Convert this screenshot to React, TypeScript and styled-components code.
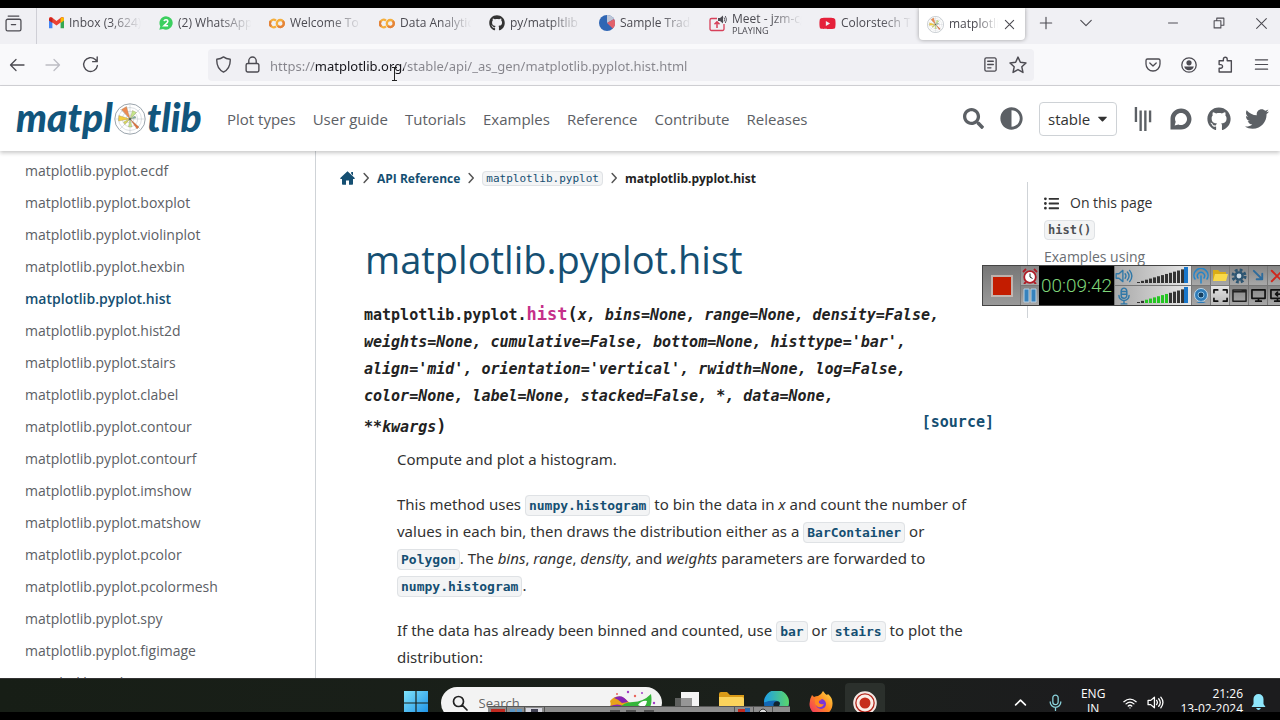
import React from "react";
import styled, { createGlobalStyle } from "styled-components";
import {
  FaSearch,
  FaAdjust,
  FaGitter,
  FaDiscourse,
  FaGithub,
  FaTwitter,
  FaListUl,
  FaCaretDown,
  FaYoutube,
} from "react-icons/fa";

const sans = '"Open Sans", "Noto Sans", sans-serif';
const wide = '"Noto Sans", "Open Sans", sans-serif';
const mono = '"DejaVu Sans Mono", "Liberation Mono", monospace';
const blue = "#154f72";

const GlobalStyle = createGlobalStyle`
  * { box-sizing: border-box; }
  body { margin: 0; background: #000; font-family: ${sans}; color: #323232; overflow: hidden; }
  button { border: 0; background: none; padding: 0; font: inherit; color: inherit; }
  a { color: inherit; text-decoration: none; }
  svg { display: block; flex: none; }
`;

const Screen = styled.div`
  position: relative;
  display: flex;
  flex-direction: column;
  height: 100vh;
  padding: 8px 0;
  overflow: hidden;
  background: #000;
`;

/* Browser chrome */

const TabStrip = styled.div`
  display: flex;
  flex: none;
  height: 36px;
  background: #f0f0f4;
  color: #4c4b52;
`;
const TabsOverview = styled.button`
  display: flex;
  align-items: center;
  width: 37px;
  padding: 0 0 6px 5px;
  border-right: 1px solid #cfcfd6;
`;
const Tab = styled.div<{ $active?: boolean }>`
  display: flex;
  align-items: center;
  gap: 5px;
  flex: 0 1 ${(p) => (p.$active ? 106 : 110)}px;
  min-width: 0;
  margin: ${(p) => (p.$active ? "0 2px 4px" : "0 0 6px")};
  padding: 0 ${(p) => (p.$active ? "10px 0 8px" : "4px 0 12px")};
  border-radius: 0 0 4px 4px;
  background: ${(p) => (p.$active ? "#fff" : "transparent")};
  box-shadow: ${(p) => (p.$active ? "0 0 4px rgba(0,0,0,.35)" : "none")};
  font-size: 12px;
`;
const TabLabel = styled.span`
  flex: 1;
  min-width: 0;
  overflow: hidden;
  white-space: nowrap;
  line-height: 16px;
  mask-image: linear-gradient(to right, #000 55%, transparent 98%);
`;
const Playing = styled.small`
  display: block;
  font-size: 9px;
  line-height: 8px;
`;
const IconButton = styled.button<{ $w: number }>`
  display: flex;
  align-items: center;
  justify-content: center;
  flex: none;
  width: ${(p) => p.$w}px;
`;
const StripActions = styled.div`
  display: flex;
  padding-bottom: 6px;
`;
const WindowButtons = styled(StripActions)`
  margin-left: auto;
`;

const Toolbar = styled.div`
  display: flex;
  align-items: center;
  flex: none;
  height: 42px;
  background: #f9f9fb;
  border-bottom: 1px solid #d3d3d8;
  color: #4c4b52;
`;
const NavButtons = styled.div`
  display: flex;
  width: 208px;
  flex: none;
`;
const AddressBar = styled.div`
  display: flex;
  align-items: center;
  flex: 1;
  height: 32px;
  padding-right: 2px;
  border-radius: 4px;
  background: #f0f0f4;
`;
const Address = styled.input`
  flex: 1;
  min-width: 0;
  height: 32px;
  padding: 2px 0 0;
  margin-left: 4px;
  border: 0;
  outline: 0;
  font: 13px ${wide};
  color: transparent;
  background: linear-gradient(to right, #85848b 45px, #15141a 45px 134px, #85848b 134px);
  background-clip: text;
  -webkit-background-clip: text;
`;
const ToolbarActions = styled.div`
  display: flex;
  width: 246px;
  justify-content: flex-end;
`;

/* Documentation page */

const SiteHeader = styled.header`
  position: relative;
  display: flex;
  align-items: center;
  flex: none;
  height: 65px;
  padding: 0 11px 0 16px;
  background: #fff;
  box-shadow: 0 2px 4px rgba(0, 0, 0, 0.22);
  color: #5c6065;
`;
const Logo = styled.a`
  display: flex;
  align-items: center;
  flex: none;
  width: 186px;
  padding-bottom: 4px;
  color: #11557c;
  font: italic 900 39px/48px Lato, sans-serif;
  svg { margin: 4px 1px 0; }
`;
const SiteNav = styled.nav`
  display: flex;
  gap: 17px;
  margin-left: 25px;
  font-size: 15px;
  line-height: 24px;
  white-space: nowrap;
`;
const HeaderTools = styled.div`
  display: flex;
  align-items: center;
  gap: 16px;
  margin-left: auto;
`;
const VersionBox = styled.div`
  position: relative;
  color: #323232;
  svg { position: absolute; right: 7px; top: 9px; pointer-events: none; }
`;
const VersionSelect = styled.select`
  appearance: none;
  width: 78px;
  height: 34px;
  padding: 0 8px;
  border: 1px solid #ced2d6;
  border-radius: 4px;
  background: #fff;
  color: inherit;
  font: 15px ${sans};
`;
const Brands = styled.div`
  display: flex;
  align-items: center;
  gap: 14px;
  margin-left: -2px;
`;

const Page = styled.div`
  display: flex;
  flex: 1;
  min-height: 0;
  background: #fff;
  overflow: hidden;
`;
const Sidebar = styled.nav`
  flex: none;
  width: 316px;
  padding: 4px 0 0 25px;
  border-right: 1px solid #cfd3d7;
  ul { list-style: none; margin: 0; padding: 0; }
`;
const SideLink = styled.a<{ $current?: boolean }>`
  display: block;
  font-size: 14px;
  line-height: 32px;
  font-weight: ${(p) => (p.$current ? 600 : 400)};
  color: ${(p) => (p.$current ? blue : "#5c6065")};
`;
const Article = styled.main`
  flex: 1;
  min-width: 0;
  padding: 17px 32px 0 24px;
`;
const Crumbs = styled.nav`
  display: flex;
  align-items: center;
  gap: 5px;
  height: 20px;
  font-size: 12px;
  font-weight: 700;
  white-space: nowrap;
  color: ${blue};
`;
const CrumbCode = styled.code`
  padding: 0 3px;
  border: 1px solid #dfe2e5;
  border-radius: 4px;
  background: #f3f4f5;
  font: 11px/17px ${mono};
`;
const Current = styled.span`
  color: #222;
`;
const Title = styled.h1`
  margin: 45px 0 0 25px;
  font-size: 38px;
  line-height: 52px;
  font-weight: 400;
  color: ${blue};
`;
const Signature = styled.div`
  margin: 16px 0 0 24px;
  font: bold 15px/27px ${mono};
  white-space: nowrap;
  color: #222;
`;
const FnName = styled.span`
  font-size: 17px;
  color: #c5308a;
`;
const Paren = styled.span`
  font-size: 17px;
`;
const LastLine = styled.div`
  display: flex;
  line-height: 32px;
`;
const Source = styled.a`
  margin: -4px 1px 0 auto;
  color: ${blue};
`;
const Description = styled.div`
  margin: 3px 0 0 57px;
  font-family: ${wide};
  font-size: 15px;
  line-height: 27px;
  white-space: nowrap;
  p { margin: 0 0 18px; }
`;
const CodeLink = styled.a`
  padding: 2px 3px;
  border: 1px solid #dfe2e5;
  border-radius: 4px;
  background: #f3f4f5;
  font: bold 13px/15px ${mono};
  color: ${blue};
`;
const Toc = styled.aside`
  flex: none;
  align-self: flex-start;
  width: 253px;
  height: 136px;
  margin-top: 31px;
  padding: 8px 0 0 16px;
  border-left: 1px solid #cfd3d7;
  font-size: 14px;
`;
const TocTitle = styled.div`
  display: flex;
  align-items: center;
  gap: 11px;
  line-height: 26px;
`;
const TocCode = styled.a`
  display: table;
  margin: 4px 0 5px;
  padding: 1px 3px;
  border: 1px solid #dfe2e5;
  border-radius: 4px;
  background: #f3f4f5;
  font: bold 12px/16px ${mono};
  color: #4d5054;
`;
const TocLink = styled.a`
  color: #6a6e73;
  line-height: 24px;
`;

/* Screen recorder widget floating over the page */

const Recorder = styled.div`
  position: absolute;
  right: 0;
  top: 265px;
  display: flex;
  width: 298px;
  height: 41px;
  border: 1px solid #444;
  border-right: 0;
  background: #777;
  overflow: hidden;
`;
const StopButton = styled.button`
  display: flex;
  align-items: center;
  justify-content: center;
  flex: none;
  width: 37px;
  background: linear-gradient(#777, #999);
`;
const Stack = styled.div<{ $w: number }>`
  display: grid;
  grid-template-rows: 1fr 1fr;
  gap: 1px;
  width: ${(p) => p.$w}px;
  flex: none;
  margin-left: 1px;
`;
const Cell = styled.button<{ $light?: boolean }>`
  display: flex;
  align-items: center;
  justify-content: center;
  overflow: hidden;
  background: ${(p) => (p.$light ? "linear-gradient(#e4e4e4, #b8b8b8)" : "linear-gradient(#858585, #a8a8a8)")};
`;
const Clock = styled.time`
  width: 75px;
  flex: none;
  background: #000;
  color: #7fd67a;
  font: 300 19px/39px Roboto, sans-serif;
  text-align: center;
`;
const Levels = styled.div`
  display: flex;
  align-items: center;
  gap: 4px;
  background: linear-gradient(90deg, #a9a9a9, #e8e8e8);
`;

/* Taskbar */

const Taskbar = styled.footer`
  flex: none;
  height: 34px;
  overflow: hidden;
  background: linear-gradient(90deg, #171e16, #1b201b 60%, #1c1c1e 85%);
  border-top: 1px solid #333;
  color: #fff;
`;
const TaskbarRow = styled.div`
  display: grid;
  grid-template-columns: 1fr auto 1fr;
  align-items: center;
  height: 48px;
  padding-left: 8px;
`;
const Apps = styled.div`
  grid-column: 2;
  display: flex;
  align-items: center;
  gap: 20px;
`;
const SearchBox = styled.label`
  display: flex;
  align-items: center;
  gap: 11px;
  width: 221px;
  height: 32px;
  margin: 0 -7px 0 -7px;
  padding: 0 4px 0 11px;
  border-radius: 16px;
  background: #f3f3f3;
  color: #222;
  input {
    flex: 1;
    min-width: 0;
    border: 0;
    padding: 0;
    background: none;
    font: 13px ${sans};
    &::placeholder { color: #666; opacity: 1; }
  }
`;
const AppTile = styled.button`
  display: flex;
  align-items: center;
  justify-content: center;
  width: 40px;
  height: 40px;
  margin-left: -8px;
  border-radius: 4px;
  background: #2b302c;
`;
const Tray = styled.div`
  grid-column: 3;
  display: flex;
  align-items: center;
  justify-content: flex-end;
  padding: 0 14px 4px 0;
  font-size: 12px;
  line-height: 15px;
`;
const TrayIcons = styled.div<{ $gap: number }>`
  display: flex;
  align-items: center;
  gap: ${(p) => p.$gap}px;
  padding-top: 3px;
`;
const Language = styled.div`
  margin: 0 18px 0 17px;
  text-align: center;
`;
const DateTime = styled.div`
  margin: 0 8px 0 16px;
  text-align: right;
`;
const MiniRecorder = styled.div`
  position: absolute;
  left: 488px;
  bottom: 8px;
  height: 6px;
`;
const Pointer = styled.div`
  position: absolute;
  left: 391px;
  top: 67px;
`;

const Line = ({ d, s = 16, w = 1.3, c = "currentColor" }: { d: string; s?: number; w?: number; c?: string }) => (
  <svg width={s} height={s} viewBox="0 0 16 16" fill="none" stroke={c} strokeWidth={w} strokeLinecap="round" strokeLinejoin="round">
    <path d={d} />
  </svg>
);

const Gmail = () => (
  <svg width="15" height="12" viewBox="0 0 15 12">
    <path d="M0 2v9.200h3.400V4.500z" fill="#4285f4" />
    <path d="M15 2v9.200h-3.400V4.500z" fill="#34a853" />
    <path d="M0 1.600C0 0 1.800-.4 3 .5l4.500 3.600L12 .5c1.200-.9 3-.5 3 1.100v1.500L7.500 8.500 0 3.100z" fill="#ea4335" />
    <path d="M11.600.8c1.400-1.200 3.400-.6 3.400.9v1.700l-3.400 2.500z" fill="#fbbc04" />
    <path d="M0 1.800 3.400.8v5.100L0 3.400z" fill="#c5221f" />
  </svg>
);
const WhatsApp = () => (
  <svg width="14" height="14" viewBox="0 0 14 14">
    <path d="M7 .2a6.700 6.700 0 1 1-3 12.700L.3 13.800l1-3.500A6.800 6.800 0 0 1 7 .2z" fill="#3ccf5f" />
    <path d="M5 5.200c.3-1.900 3.900-1.900 3.900.1 0 1.300-1.400 2.200-3.900 4.400h4.100" fill="none" stroke="#fff" strokeWidth="1.500" />
  </svg>
);
const Colab = () => (
  <svg width="16" height="11" viewBox="0 0 16 11" fill="none" strokeWidth="2.300">
    <path d="M7 2.600a3.700 3.700 0 1 0 0 5.800" stroke="#f5ae3c" />
    <circle cx="11.300" cy="5.500" r="3.500" stroke="#f5ae3c" />
    <path d="M8.800 8a3.500 3.500 0 0 0 5-5" stroke="#e4823a" />
    <path d="M1.800 3.300a3.700 3.700 0 0 0 .4 5" stroke="#e4823a" />
  </svg>
);
const PieIcon = () => (
  <svg width="16" height="16" viewBox="0 0 16 16">
    <circle cx="8" cy="8" r="8" fill="#2f66b4" />
    <path d="M8 8V0a8 8 0 0 1 7 4z" fill="#bfc6d6" />
    <path d="m8 8 7-4a8 8 0 0 1-1.300 9.600z" fill="#e2616b" />
  </svg>
);
const MeetIcon = () => (
  <svg width="18" height="17" viewBox="0 0 18 17" fill="none">
    <path d="M8 3.500H2.500a1.500 1.500 0 0 0-1.500 1.500v9a1.500 1.500 0 0 0 1.500 1.500h11A1.500 1.500 0 0 0 15 14V9" stroke="#d7405a" strokeWidth="1.300" />
    <path d="M8 13V7M5.500 9.300 8 6.800l2.500 2.500" stroke="#d7405a" strokeWidth="1.500" />
    <path d="M9 3h2l3-2.500v8L11 6H9z" fill="#4c4b52" />
    <path d="M15 2.500q1.500 2 0 4M16.300 1q2.500 3.500 0 7" stroke="#4c4b52" strokeWidth=".9" />
  </svg>
);
const Polar = ({ s }: { s: number }) => (
  <svg width={s} height={s} viewBox="0 0 32 32">
    <circle cx="16" cy="16" r="15.200" fill="#fff" stroke="#8f9aa3" strokeWidth=".9" />
    <g fill="none" stroke="#b9c0c6" strokeWidth=".5">
      <circle cx="16" cy="16" r="11.500" />
      <circle cx="16" cy="16" r="7.700" />
      <circle cx="16" cy="16" r="4" />
      <path d="M16 1v30M1 16h30M5.400 5.400l21.200 21.200M26.600 5.400 5.400 26.600" />
    </g>
    <g stroke="#8a7a55" strokeWidth=".3">
      <path d="m16 16-8.500-9.500 5-3z" fill="#ec8a52" />
      <path d="M16 16 4.500 18l.3-5.500z" fill="#f5cf3d" />
      <path d="m16 16 2.500-8.500 4 2z" fill="#c3e68a" />
      <path d="m16 16-6.500 3 1.500 2.500z" fill="#d8d95a" />
      <path d="m16 16-1.500 8h3.500z" fill="#c3e68a" />
      <path d="m16 16 9 8-2 2z" fill="#e0713e" />
      <path d="m16 16 5-3 1 2z" fill="#78b3a5" />
    </g>
    <circle cx="16" cy="16" r="1.300" fill="#5a6a5a" />
  </svg>
);
const Home = () => (
  <svg width="15" height="14" viewBox="0 0 15 14">
    <path d="M7.500.3 15 7.200l-.8.900H13V13q0 .8-.8.8H9V9.500H6v4.300H2.800Q2 13.800 2 13V8.100H.8L0 7.200zM11.200 1H13v3.500l-1.800-1.700z" fill="currentColor" />
  </svg>
);
const Sep = () => <Line d="m5.500 2 5.500 6-5.500 6" s={12} w={2} c="#555" />;

const Bars = ({ active }: { active: number }) => (
  <svg width="52" height="17" viewBox="0 0 52 17">
    {Array.from({ length: 12 }, (_, i) => {
      const h = 1 + i * 1.15;
      return <rect key={i} x={i * 4} y={16 - h} width="3" height={h} fill={i < active && i > 1 ? "#24c522" : "#333"} />;
    })}
    <rect x="47" y="0" width="4" height="16" fill="#1976c9" />
  </svg>
);

const tabs: [React.ReactNode, string][] = [
  [<Gmail />, "Inbox (3,624)"],
  [<WhatsApp />, "(2) WhatsApp"],
  [<Colab />, "Welcome To C"],
  [<Colab />, "Data Analytics"],
  [<FaGithub size={16} color="#333" />, "py/matpltlib at"],
  [<PieIcon />, "Sample Trade"],
];

const functions = [
  "ecdf", "boxplot", "violinplot", "hexbin", "hist", "hist2d", "stairs", "clabel", "contour",
  "contourf", "imshow", "matshow", "pcolor", "pcolormesh", "spy", "figimage", "annotate",
];

const menuItems = ["Plot types", "User guide", "Tutorials", "Examples", "Reference", "Contribute", "Releases"];

export default function App() {
  return (
    <Screen>
      <GlobalStyle />
      <TabStrip>
        <TabsOverview aria-label="Recent tabs">
          <Line s={17} w={1.2} d="M3 1h10M2.500 4h11a1.500 1.500 0 0 1 1.500 1.500v8A1.500 1.500 0 0 1 13.500 15h-11A1.500 1.500 0 0 1 1 13.500v-8A1.500 1.500 0 0 1 2.500 4zM6 9h4" />
        </TabsOverview>
        {tabs.map(([icon, label], i) => (
          <Tab key={i}>
            {icon}
            <TabLabel>{label}</TabLabel>
          </Tab>
        ))}
        <Tab>
          <MeetIcon />
          <TabLabel>
            Meet - jzm-cg
            <Playing>PLAYING</Playing>
          </TabLabel>
        </Tab>
        <Tab>
          <FaYoutube size={17} color="#e5203a" />
          <TabLabel>Colorstech Tr</TabLabel>
        </Tab>
        <Tab $active>
          <Polar s={17} />
          <TabLabel>matplotlib</TabLabel>
          <button aria-label="Close tab"><Line s={11} w={1.6} d="M2 2l12 12M14 2 2 14" /></button>
        </Tab>
        <StripActions>
          <IconButton $w={38} aria-label="New tab"><Line s={14} w={1.3} d="M8 1.500v13M1.500 8h13" /></IconButton>
          <IconButton $w={42} aria-label="List all tabs"><Line s={14} w={1.300} d="m2 5 6 6 6-6" /></IconButton>
        </StripActions>
        <WindowButtons>
          <IconButton $w={46} aria-label="Minimise"><Line s={12} d="M2 8h12" /></IconButton>
          <IconButton $w={46} aria-label="Restore"><Line s={12} w={1.400} d="M1.500 5h9v9.500h-9zM5 5V1.500h9.500V11h-4" /></IconButton>
          <IconButton $w={38} aria-label="Close"><Line s={13} d="M2 2l12 12M14 2 2 14" /></IconButton>
        </WindowButtons>
      </TabStrip>

      <Toolbar>
        <NavButtons>
          <IconButton $w={34} aria-label="Back"><Line d="M15 8H1.500M7 2.500 1.500 8 7 13.500" /></IconButton>
          <IconButton $w={38} aria-label="Forward"><Line c="#bdbdc4" d="M1 8h13.500M9 2.500 14.500 8 9 13.500" /></IconButton>
          <IconButton $w={36} aria-label="Reload"><Line s={17} d="M14.500 9A6.500 6.500 0 1 1 12.500 3.300L14 5M14.300 1v4.300H10" /></IconButton>
        </NavButtons>
        <AddressBar>
          <IconButton $w={31} aria-label="Tracking protection"><Line s={17} d="M8 .8c2 1.500 4 2 6.300 2.300.3 5-1.300 9.500-6.300 12.100C3 12.600 1.400 8.100 1.700 3.100 4 2.800 6 2.300 8 .8z" /></IconButton>
          <IconButton $w={27} aria-label="Site information"><Line s={17} d="M3.500 7h9A1.500 1.500 0 0 1 14 8.500v5a1.500 1.500 0 0 1-1.500 1.500h-9A1.500 1.500 0 0 1 2 13.500v-5A1.500 1.500 0 0 1 3.500 7zM4.500 7V4.500a3.500 3.500 0 0 1 7 0V7" /></IconButton>
          <Address aria-label="Address" defaultValue="https://matplotlib.org/stable/api/_as_gen/matplotlib.pyplot.hist.html" />
          <IconButton $w={28} aria-label="Reader view"><Line s={15} w={1.400} d="M3.500 1h9A1.500 1.500 0 0 1 14 2.500v11a1.500 1.500 0 0 1-1.500 1.500h-9A1.500 1.500 0 0 1 2 13.500v-11A1.500 1.500 0 0 1 3.500 1zM5 4.500h6M5 8h6M5 11.500h3.500" /></IconButton>
          <IconButton $w={28} aria-label="Bookmark"><Line s={18} d="m8 1 2.100 4.600 5 .6-3.700 3.400 1 5L8 12.100l-4.400 2.500 1-5L.9 6.200l5-.6z" /></IconButton>
        </AddressBar>
        <ToolbarActions>
          <IconButton $w={37} aria-label="Save to Pocket"><Line d="M2.500 2h11A1.500 1.500 0 0 1 15 3.500V7A7 7 0 0 1 1 7V3.500A1.500 1.500 0 0 1 2.500 2zM4.800 6 8 9l3.200-3" /></IconButton>
          <IconButton $w={36} aria-label="Account">
            <svg width="16" height="16" viewBox="0 0 16 16"><circle cx="8" cy="8" r="7.200" fill="none" stroke="currentColor" strokeWidth="1.300" /><circle cx="8" cy="5.800" r="2.600" fill="currentColor" /><path d="M3.200 9.500h9.600q-1 3.800-4.800 3.800T3.200 9.500z" fill="currentColor" /></svg>
          </IconButton>
          <IconButton $w={36} aria-label="Extensions"><Line s={17} d="M2 4.500h4V3a1.800 1.800 0 0 1 3.600 0v1.500h3.900V15H2v-3.500h1.500a1.700 1.700 0 0 0 0-3.400H2z" /></IconButton>
          <IconButton $w={37} aria-label="Menu"><Line s={15} d="M1.500 3h13M1.500 8h13M1.500 13h13" /></IconButton>
        </ToolbarActions>
      </Toolbar>

      <SiteHeader>
        <Logo href="#" aria-label="matplotlib">
          matpl<Polar s={32} />tlib
        </Logo>
        <SiteNav>
          {menuItems.map((m) => <a href="#" key={m}>{m}</a>)}
        </SiteNav>
        <HeaderTools>
          <button aria-label="Search"><FaSearch size={21} /></button>
          <button aria-label="Colour mode"><FaAdjust size={23} /></button>
          <VersionBox>
            <VersionSelect aria-label="Version" defaultValue="stable"><option>stable</option></VersionSelect>
            <FaCaretDown size={15} />
          </VersionBox>
          <Brands>
            <a href="#" aria-label="Gitter"><FaGitter size={24} /></a>
            <a href="#" aria-label="Discourse"><FaDiscourse size={24} /></a>
            <a href="#" aria-label="GitHub"><FaGithub size={24} /></a>
            <a href="#" aria-label="Twitter"><FaTwitter size={24} /></a>
          </Brands>
        </HeaderTools>
      </SiteHeader>

      <Page>
        <Sidebar>
          <ul>
            {functions.map((f) => (
              <li key={f}><SideLink href="#" $current={f === "hist"}>matplotlib.pyplot.{f}</SideLink></li>
            ))}
          </ul>
        </Sidebar>
        <Article>
          <Crumbs>
            <a href="#" aria-label="Home"><Home /></a>
            <Sep />
            <a href="#">API Reference</a>
            <Sep />
            <a href="#"><CrumbCode>matplotlib.pyplot</CrumbCode></a>
            <Sep />
            <Current>matplotlib.pyplot.hist</Current>
          </Crumbs>
          <Title>matplotlib.pyplot.hist</Title>
          <Signature>
            matplotlib.pyplot.<FnName>hist</FnName><Paren>(</Paren><em>x, bins=None, range=None, density=False,</em><br />
            <em>weights=None, cumulative=False, bottom=None, histtype='bar',</em><br />
            <em>align='mid', orientation='vertical', rwidth=None, log=False,</em><br />
            <em>color=None, label=None, stacked=False, *, data=None,</em>
            <LastLine>
              <span><em>**kwargs</em><Paren>)</Paren></span>
              <Source href="#">[source]</Source>
            </LastLine>
          </Signature>
          <Description>
            <p>Compute and plot a histogram.</p>
            <p>
              This method uses <CodeLink href="#">numpy.histogram</CodeLink> to bin the data in <em>x</em> and count the number of<br />
              values in each bin, then draws the distribution either as a <CodeLink href="#">BarContainer</CodeLink> or<br />
              <CodeLink href="#">Polygon</CodeLink>. The <em>bins</em>, <em>range</em>, <em>density</em>, and <em>weights</em> parameters are forwarded to<br />
              <CodeLink href="#">numpy.histogram</CodeLink>.
            </p>
            <p>
              If the data has already been binned and counted, use <CodeLink href="#">bar</CodeLink> or <CodeLink href="#">stairs</CodeLink> to plot the<br />
              distribution:
            </p>
          </Description>
        </Article>
        <Toc>
          <TocTitle><FaListUl size={15} />On this page</TocTitle>
          <TocCode href="#">hist()</TocCode>
          <TocLink href="#">Examples using</TocLink>
        </Toc>
      </Page>

      <Taskbar>
        <TaskbarRow>
          <Apps>
            <button aria-label="Start">
              <svg width="24" height="24" viewBox="0 0 24 24">
                <defs><linearGradient id="win" x1="0" y1="0" x2="1" y2="1"><stop offset="0" stopColor="#7fe3fb" /><stop offset="1" stopColor="#1a8fe6" /></linearGradient></defs>
                <path d="M0 0h11.400v11.400H0zM12.600 0H24v11.400H12.600zM0 12.600h11.400V24H0zM12.600 12.600H24V24H12.600z" fill="url(#win)" />
              </svg>
            </button>
            <SearchBox>
              <Line s={16} w={1.700} d="M11.500 6.500a5 5 0 1 1-10 0 5 5 0 0 1 10 0zM10.200 10.200 15 15" />
              <input aria-label="Search" placeholder="Search" />
              <svg width="52" height="28" viewBox="0 0 52 28">
                <path d="M4 12q6-7 14-3l6 5-8 8q-6-1-10 4 2-6-4-5 4-4 2-9z" fill="#e8a31c" />
                <path d="M8 9q8-5 14 4l-6 1q-4-4-8-5zM4 17q8-3 13 0l-5 7q-2-4-8-7z" fill="#8624b5" />
                <path d="M13 20q4-7 14-7 10 0 18-8 2 12-4 18-6 4-11-2-5 5-11 3-3-1-6-4z" fill="#35b53a" />
                <path d="M32 16q4-5 9-4-1 6-5 6zM18 19q4-4 8 0-4 3-8 0z" fill="#fff" />
                <g fill="#a23bc6"><circle cx="22" cy="3" r="1.200" /><circle cx="48" cy="14" r="1.200" /><circle cx="36" cy="4" r="1" /></g>
                <g fill="#e9655c"><circle cx="11" cy="5" r="1" /><circle cx="29" cy="7" r="1.200" /><circle cx="49" cy="20" r="1" /></g>
              </svg>
            </SearchBox>
            <button aria-label="Task view">
              <svg width="24" height="24" viewBox="0 0 24 24"><path d="M6 1h18v17H6z" fill="#f4f4f4" /><path d="M0 7h17v14H0z" fill="#777" opacity=".75" /></svg>
            </button>
            <button aria-label="Files">
              <svg width="25" height="22" viewBox="0 0 25 22"><path d="M0 2q0-2 2-2h6l3 3h14v6H0z" fill="#d99a17" /><path d="M0 5h23q2 0 2 2v13q0 2-2 2H2q-2 0-2-2z" fill="#fbd35c" /></svg>
            </button>
            <button aria-label="Edge">
              <svg width="25" height="25" viewBox="0 0 24 24">
                <defs><linearGradient id="edge"><stop offset="0" stopColor="#1d9ee8" /><stop offset="1" stopColor="#5bd669" /></linearGradient></defs>
                <circle cx="12" cy="12" r="12" fill="#1267b4" />
                <path d="M0 11A12 12 0 0 1 24 11q0 6-6 6-5 0-3-4 0-4-5-4-6 0-10 2z" fill="url(#edge)" />
                <path d="M9 13q1-4 5-3 2 1 1 3-2 4 3 5-4 3-7 0-2-2-2-5z" fill="#10232e" />
              </svg>
            </button>
            <button aria-label="Firefox">
              <svg width="24" height="24" viewBox="0 0 24 24">
                <defs><linearGradient id="fox" x1="1" y1="0" x2="0" y2="1"><stop offset="0" stopColor="#ffe14a" /><stop offset=".45" stopColor="#ff8a20" /><stop offset="1" stopColor="#f0256b" /></linearGradient></defs>
                <path d="M3 4l2 2q2-1 4-1l3-2 2-3q2 3 4 4l1-1q5 4 4.500 10A11.500 11.500 0 0 1 .5 13Q.5 8 3 4z" fill="url(#fox)" />
                <circle cx="12" cy="13" r="5" fill="#7a35d8" />
                <path d="M6 8q4-2 7 1-4 0-3 3 2 2 5 1-2 4-6 3-4-3-3-8z" fill="#ff8a20" />
              </svg>
            </button>
            <AppTile aria-label="Recorder">
              <svg width="24" height="24" viewBox="0 0 24 24"><circle cx="12" cy="12" r="10.800" fill="#b3261b" stroke="#f4e8e4" strokeWidth="2" /><circle cx="12" cy="12" r="7" fill="#c62d1b" stroke="#fbeee8" strokeWidth="3" /></svg>
            </AppTile>
          </Apps>
          <Tray>
            <TrayIcons $gap={20}>
              <Line s={13} w={2} d="m2 11 6-6 6 6" />
              <Line s={17} w={1.200} c="#8bd3dc" d="M8 1a2.500 2.500 0 0 1 2.500 2.500v4a2.500 2.500 0 0 1-5 0v-4A2.500 2.500 0 0 1 8 1zM3 7.500a5 5 0 0 0 10 0M8 12.500V15.500" />
            </TrayIcons>
            <Language>ENG<br />IN</Language>
            <TrayIcons $gap={10}>
              <Line s={14} w={1.500} d="M1 6.500q7-6 14 0M3.500 9q4.500-4 9 0M6 11.500q2-1.800 4 0M8 13.500v.1" />
              <Line s={17} w={1.200} d="M1 6h2.500L7 3v10l-3.500-3H1zM9 6q1.500 2 0 4M11 4.500q3 3.500 0 7M13 3q4 5 0 10" />
            </TrayIcons>
            <DateTime>21:26<br />13-02-2024</DateTime>
            <TrayIcons $gap={0}>
              <svg width="15" height="17" viewBox="0 0 15 17"><path d="M7.500 0a5 5 0 0 1 5 5v5l2 3H.5l2-3V5a5 5 0 0 1 5-5zM5 14h5q-2.500 4-5 0z" fill="#8ee6fb" /></svg>
            </TrayIcons>
          </Tray>
        </TaskbarRow>
      </Taskbar>

      <Recorder>
        <StopButton aria-label="Stop recording">
          <svg width="24" height="24" viewBox="0 0 24 24"><path d="M1 1h22v22H1z" fill="#d9c6bf" opacity=".7" /><path d="M3 3h18v18H3z" fill="#c31c00" /></svg>
        </StopButton>
        <Stack $w={18}>
          <Cell aria-label="Timer">
            <svg width="16" height="16" viewBox="0 0 16 16"><circle cx="8" cy="9" r="5.800" fill="#fff" stroke="#b01c26" strokeWidth="1.800" /><path d="M1 4l3-3M15 4l-3-3M4 14l-2 2M12 14l2 2" stroke="#b01c26" strokeWidth="1.800" /><path d="M8 5.500V9l2.500 1.500" stroke="#222" fill="none" /></svg>
          </Cell>
          <Cell aria-label="Pause">
            <svg width="14" height="15" viewBox="0 0 14 15"><path d="M1 1h5v13H1zM8 1h5v13H8z" fill="#3682bd" stroke="#b8d0e2" /></svg>
          </Cell>
        </Stack>
        <Clock>00:09:42</Clock>
        <Stack $w={76}>
          <Levels>
            <Line s={18} w={1.200} c="#2f78a8" d="M1 6h2.500L7 3v10l-3.500-3H1zM9 6q1.500 2 0 4M11 4.500q3 3.500 0 7M13 3q4 5 0 10" />
            <Bars active={0} />
          </Levels>
          <Levels>
            <Line s={18} w={1.300} c="#2f78a8" d="M8 1a2.500 2.500 0 0 1 2.500 2.500v4a2.500 2.500 0 0 1-5 0v-4A2.500 2.500 0 0 1 8 1zM3.500 7.500a4.500 4.500 0 0 0 9 0M8 12.500V15M5.500 15h5M6 4h4M6 6.500h4" />
            <Bars active={8} />
          </Levels>
        </Stack>
        <Stack $w={18}>
          <Cell aria-label="Broadcast"><Line w={1.500} c="#2386cc" d="M2 11a7 7 0 1 1 12 0M5 10a3.600 3.600 0 1 1 6 0M8 8v7" /></Cell>
          <Cell aria-label="Webcam"><svg width="16" height="16" viewBox="0 0 16 16"><circle cx="8" cy="7" r="6.500" fill="#2f7cb8" stroke="#bcd6e8" /><circle cx="8" cy="7" r="3" fill="#16405f" stroke="#8fc4e8" /><path d="M3 15q5-3 10 0z" fill="#2f7cb8" /></svg></Cell>
        </Stack>
        <Stack $w={18}>
          <Cell aria-label="Open folder"><svg width="16" height="13" viewBox="0 0 16 13"><path d="M1 12V1h5l2 2h6v9z" fill="#d9ac17" /><path d="m1 12 2-7h13l-2 7z" fill="#f8d94a" /></svg></Cell>
          <Cell $light aria-label="Full screen"><Line s={15} w={1.800} c="#111" d="M1 5V2h4M11 2h4v3M15 11v3h-4M5 14H1v-3" /></Cell>
        </Stack>
        <Stack $w={18}>
          <Cell aria-label="Settings">
            <svg width="16" height="16" viewBox="0 0 16 16"><circle cx="8" cy="8" r="6" fill="none" stroke="#2e5672" strokeWidth="3" strokeDasharray="2.700 2" /><circle cx="8" cy="8" r="3.600" fill="#cfdbe4" stroke="#2e5672" strokeWidth="2.400" /></svg>
          </Cell>
          <Cell aria-label="Window"><Line s={15} w={1.600} c="#222" d="M1 2h14v12H1zM1 4h14M11 3h3" /></Cell>
        </Stack>
        <Stack $w={18}>
          <Cell aria-label="Minimise to corner"><Line s={15} w={2} c="#2d6b9c" d="m3 3 9 9M12 6v6H6" /></Cell>
          <Cell aria-label="Display"><Line s={15} w={1.800} c="#111" d="M1 2h14v9H1zM8 11v3M5 14h6" /></Cell>
        </Stack>
        <Stack $w={18}>
          <Cell aria-label="Close recorder"><Line s={14} w={2.200} c="#d0281e" d="M2 2l12 12M14 2 2 14" /></Cell>
          <Cell aria-label="Switch display"><Line s={15} w={1.800} c="#111" d="M15 2H1v9h14M8 11v3M5 14h6M12 6.500H6M8 4.500l-2 2 2 2" /></Cell>
        </Stack>
      </Recorder>

      <MiniRecorder>
        <svg width="302" height="6" viewBox="0 0 302 6">
          <path d="M0 0h302v6H0z" fill="#8e8e8e" />
          <path d="M0 .5h302" stroke="#555" />
          <path d="M3 3h14v3H3z" fill="#c32a20" />
          <path d="M22 3h5v3h-5zM29 3h5v3h-5z" fill="#5b97c6" />
          <path d="M38 2h16v4H38z" fill="#d5d5de" /><path d="M43 3h7v3h-7z" fill="#445" />
          <path d="M18.500 0v6M36.500 0v6M56.500 0v6M246.500 0v6M265.500 0v6M284.500 0v6" stroke="#555" />
          <path d="M122 4h10v2h-10zM138 4h10v2h-10zM156 4h10v2h-10z" fill="#555" />
          <path d="M250 3h7v3h-7z" fill="#c32a20" /><path d="M257 2h5v4h-5z" fill="#2f68ac" />
          <path d="M271 6q4-6 8 0" fill="#ddd" stroke="#333" />
        </svg>
      </MiniRecorder>
      <Pointer>
        <svg width="7" height="14" viewBox="0 0 7 14"><path d="M1 .5h5M1 13.500h5M3.500.5v13" stroke="#222" fill="none" /></svg>
      </Pointer>
    </Screen>
  );
}
